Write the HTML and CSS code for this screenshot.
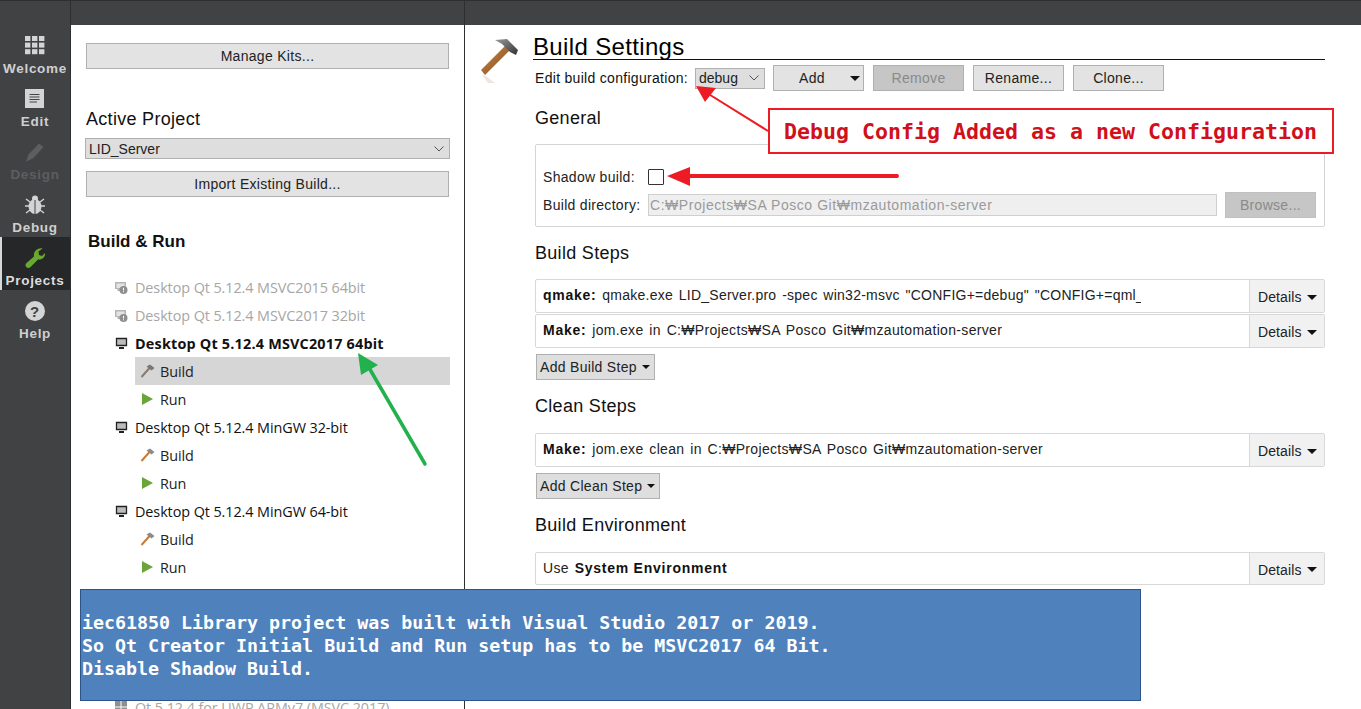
FILE: index.html
```html
<!DOCTYPE html>
<html lang="en">
<head>
<meta charset="utf-8">
<title>Qt Creator - Build Settings</title>
<link rel="stylesheet" href="styles.css">
</head>
<body>
<div class="app">
  <header class="topbar"><div class="tb-side"></div><div class="tb-left"></div><div class="tb-right"></div></header>
  <div class="main">
    <nav class="sidebar">
      <div class="mode">
        <svg class="mode-ico" viewBox="0 0 20 20"><g fill="#d4d4d4"><rect x="0" y="0" width="5.4" height="5"/><rect x="7" y="0" width="5.4" height="5"/><rect x="14" y="0" width="5.4" height="5"/><rect x="0" y="6.6" width="5.4" height="5"/><rect x="7" y="6.6" width="5.4" height="5"/><rect x="14" y="6.6" width="5.4" height="5"/><rect x="0" y="13.2" width="5.4" height="5"/><rect x="7" y="13.2" width="5.4" height="5"/><rect x="14" y="13.2" width="5.4" height="5"/></g></svg>
        <span>Welcome</span>
      </div>
      <div class="mode">
        <svg class="mode-ico" viewBox="0 0 20 20"><rect width="19" height="19" fill="#d4d4d4"/><path d="M4.500 5.500H14.500M4.500 8H14.500M4.500 10.500H14.500M4.500 13H12" stroke="#444" stroke-width="1"/></svg>
        <span>Edit</span>
      </div>
      <div class="mode mode-off">
        <svg class="mode-ico" viewBox="0 0 20 20"><path d="M14 1.500 18.500 5 8 16.500 1 19.500 3.500 12.500Z" fill="#5c5e60"/></svg>
        <span>Design</span>
      </div>
      <div class="mode">
        <svg class="mode-ico" viewBox="0 0 20 20"><g stroke="#d4d4d4" stroke-width="1.400"><path d="M1 4 5 7M19 4 15 7M0 11H4M20 11H16M1 18 5 15M19 18 15 15"/></g><ellipse cx="10" cy="11.500" rx="6.500" ry="7.500" fill="#d4d4d4"/><circle cx="10" cy="3.500" r="3" fill="#d4d4d4"/><path d="M10 5V19" stroke="#404244" stroke-width="1"/></svg>
        <span>Debug</span>
      </div>
      <div class="mode mode-on">
        <svg class="mode-ico" viewBox="0 0 20 20"><path d="M17.500 0.500 13.500 3.500 14 7 17 8 20 5C20.500 9 17 12 13 11.500L5.500 19C4 20.500 1.500 20 .8 18.300 .2 17 .6 15.800 1.500 15L9 8.500C8 4 12.500-.5 17.500.5Z" fill="#6aa92f"/></svg>
        <span>Projects</span>
      </div>
      <div class="mode">
        <svg class="mode-ico" viewBox="0 0 20 20"><circle cx="10" cy="10" r="10" fill="#d4d4d4"/><text x="10" y="15.500" class="help-q">?</text></svg>
        <span>Help</span>
      </div>
    </nav>

    <aside class="left">
      <button class="btn btn-wide">Manage Kits...</button>
      <h2 class="active-title">Active Project</h2>
      <div class="combo combo-wide"><span>LID_Server</span><svg class="chev" viewBox="0 0 10 6"><path d="M.5.500 5 5 9.500.5" fill="none" stroke="#555"/></svg></div>
      <button class="btn btn-wide import">Import Existing Build...</button>
      <h3 class="br-title">Build &amp; Run</h3>
      <ul class="tree">
        <li class="kit kit-off"><svg class="kit-ico" viewBox="0 0 13 13"><path d="M0 1H11V8H7V10H2.500V8H0Z" fill="#b5b5b5"/><path d="M1.500 2.500H9.500V7H1.500Z" fill="#e4e4e4"/><circle cx="8.500" cy="9" r="4" fill="#8f8f8f"/><path d="M8.500 6.800V9.500M8.500 10.300V11.300" stroke="#fff"/></svg>Desktop Qt 5.12.4 MSVC2015 64bit</li>
        <li class="kit kit-off"><svg class="kit-ico" viewBox="0 0 13 13"><path d="M0 1H11V8H7V10H2.500V8H0Z" fill="#b5b5b5"/><path d="M1.500 2.500H9.500V7H1.500Z" fill="#e4e4e4"/><circle cx="8.500" cy="9" r="4" fill="#8f8f8f"/><path d="M8.500 6.800V9.500M8.500 10.300V11.300" stroke="#fff"/></svg>Desktop Qt 5.12.4 MSVC2017 32bit</li>
        <li class="kit kit-cur"><svg class="kit-ico" viewBox="0 0 13 13"><path d="M1.500 1.500H11.500V8.500H1.500Z" fill="#bbb" stroke="#222" stroke-width="1.300"/><path d="M4 10H9V12H4Z" fill="#222"/></svg>Desktop Qt 5.12.4 MSVC2017 64bit</li>
        <li class="sub sub-sel"><svg class="sub-ico" viewBox="0 0 16 14"><path d="M1.500 13 9.500 4" stroke="#8a7a6c" stroke-width="2"/><path d="M6.500 2.500 10 .5 14.500 4 11.500 6.500Z" fill="#777"/></svg>Build</li>
        <li class="sub"><svg class="sub-ico" viewBox="0 0 16 14"><path d="M2 1 13 7 2 13Z" fill="#6aa53a"/></svg>Run</li>
        <li class="kit"><svg class="kit-ico" viewBox="0 0 13 13"><path d="M1.500 1.500H11.500V8.500H1.500Z" fill="#bbb" stroke="#222" stroke-width="1.300"/><path d="M4 10H9V12H4Z" fill="#222"/></svg>Desktop Qt 5.12.4 MinGW 32-bit</li>
        <li class="sub"><svg class="sub-ico" viewBox="0 0 16 14"><path d="M1.500 13 9.500 4" stroke="#c87a35" stroke-width="2"/><path d="M6.500 2.500 10 .5 14.500 4 11.500 6.500Z" fill="#8a8a8a"/></svg>Build</li>
        <li class="sub"><svg class="sub-ico" viewBox="0 0 16 14"><path d="M2 1 13 7 2 13Z" fill="#6aa53a"/></svg>Run</li>
        <li class="kit"><svg class="kit-ico" viewBox="0 0 13 13"><path d="M1.500 1.500H11.500V8.500H1.500Z" fill="#bbb" stroke="#222" stroke-width="1.300"/><path d="M4 10H9V12H4Z" fill="#222"/></svg>Desktop Qt 5.12.4 MinGW 64-bit</li>
        <li class="sub"><svg class="sub-ico" viewBox="0 0 16 14"><path d="M1.500 13 9.500 4" stroke="#c87a35" stroke-width="2"/><path d="M6.500 2.500 10 .5 14.500 4 11.500 6.500Z" fill="#8a8a8a"/></svg>Build</li>
        <li class="sub"><svg class="sub-ico" viewBox="0 0 16 14"><path d="M2 1 13 7 2 13Z" fill="#6aa53a"/></svg>Run</li>
        <li class="kit kit-off kit-last"><svg class="kit-ico" viewBox="0 0 13 13"><g fill="#8f8f8f"><rect width="5.500" height="5.500"/><rect x="6.500" width="5.500" height="5.500"/><rect y="6.500" width="5.500" height="5.500"/><rect x="6.500" y="6.500" width="5.500" height="5.500"/></g></svg>Qt 5.12.4 for UWP ARMv7 (MSVC 2017)</li>
      </ul>
    </aside>

    <main class="right">
      <div class="hammer-col">
        <svg class="hammer" viewBox="0 0 40 46">
          <defs>
            <linearGradient id="hdl" x1="0" y1="0" x2="1" y2="1"><stop offset="0" stop-color="#d08a45"/><stop offset="1" stop-color="#7c4a1e"/></linearGradient>
            <linearGradient id="hd" x1="0" y1="0" x2="1" y2="1"><stop offset="0" stop-color="#9a9a9a"/><stop offset=".6" stop-color="#5a5c5e"/><stop offset="1" stop-color="#2f3032"/></linearGradient>
          </defs>
          <path d="M2 32 26 8 31 12 6 37Z" fill="url(#hdl)"/>
          <path d="M16 2 28 1 39 12 37 17 31 14 23 6Z" fill="url(#hd)"/>
          <path d="M3 37 7 38 16 45 9 45Z" fill="#eee6df"/>
        </svg>
      </div>
      <div class="content">
        <h1 class="page-title">Build Settings</h1>
        <div class="config-row">
          <label class="cfg-label">Edit build configuration:</label>
          <div class="combo combo-debug"><span>debug</span><svg class="chev" viewBox="0 0 10 6"><path d="M.5.500 5 5 9.500.5" fill="none" stroke="#555"/></svg></div>
          <button class="btn btn-cfg btn-add"><span>Add</span><i class="caret"></i></button>
          <button class="btn btn-cfg btn-dis">Remove</button>
          <button class="btn btn-cfg">Rename...</button>
          <button class="btn btn-cfg">Clone...</button>
        </div>
        <h2 class="sec sec-general">General</h2>
        <section class="gen-box">
          <div class="gen-row gen-shadow"><span class="gen-label">Shadow build:</span><span class="check"></span></div>
          <div class="gen-row gen-dir"><span class="gen-label">Build directory:</span><div class="path-input">C:₩Projects₩SA Posco Git₩mzautomation-server</div><button class="btn btn-browse">Browse...</button></div>
        </section>
        <h2 class="sec sec-steps">Build Steps</h2>
        <div class="step"><div class="step-text step-clip"><b>qmake:</b> qmake.exe LID_Server.pro -spec win32-msvc "CONFIG+=debug" "CONFIG+=qml_debug"</div><div class="details">Details<i class="caret"></i></div></div>
        <div class="step step-2"><div class="step-text"><b>Make:</b> jom.exe in C:₩Projects₩SA Posco Git₩mzautomation-server</div><div class="details">Details<i class="caret"></i></div></div>
        <button class="btn btn-step">Add Build Step<i class="caret caret-sm"></i></button>
        <h2 class="sec sec-clean">Clean Steps</h2>
        <div class="step"><div class="step-text"><b>Make:</b> jom.exe clean in C:₩Projects₩SA Posco Git₩mzautomation-server</div><div class="details">Details<i class="caret"></i></div></div>
        <button class="btn btn-step btn-step-clean">Add Clean Step<i class="caret caret-sm"></i></button>
        <h2 class="sec sec-env">Build Environment</h2>
        <div class="step step-env"><div class="step-text">Use <b>System Environment</b></div><div class="details">Details<i class="caret"></i></div></div>
      </div>
    </main>
  </div>

  <div class="callout">Debug Config Added as a new Configuration</div>
  <svg class="arrows" viewBox="0 0 1361 709">
    <path d="M768 131 707 93" stroke="#ed1c24" stroke-width="2" fill="none"/>
    <path d="M696 86 716 88 705 102Z" fill="#ed1c24"/>
    <path d="M680 176H897" stroke="#ed1c24" stroke-width="4" stroke-linecap="round" fill="none"/>
    <path d="M667 176 690 167V186Z" fill="#ed1c24"/>
    <path d="M425 464 368 366" stroke="#22b14c" stroke-width="3.500" stroke-linecap="round" fill="none"/>
    <path d="M358 353 378 365 361 375Z" fill="#22b14c"/>
  </svg>
  <div class="note">
    <p>iec61850 Library project was built with Visual Studio 2017 or 2019.</p>
    <p>So Qt Creator Initial Build and Run setup has to be MSVC2017 64 Bit.</p>
    <p>Disable Shadow Build.</p>
  </div>
</div>
</body>
</html>
```
FILE: styles.css
```css
* { box-sizing: border-box; }
html, body { margin: 0; height: 100%; overflow: hidden; background: #fff; }
body { font-family: "Liberation Sans", Arial, sans-serif; font-size: 14px; color: #111; }
.app { position: relative; width: 1361px; height: 709px; overflow: hidden; display: flex; flex-direction: column; }

.topbar { height: 25px; display: flex; background: #404244; border-top: 1px solid #2e2f30; flex: none; }
.tb-side { width: 71px; border-right: 1px solid #2e2f30; }
.tb-left { width: 394px; border-right: 1px solid #2e2f30; }
.tb-right { flex: 1; }

.main { flex: 1; display: flex; min-height: 0; }

.sidebar { width: 71px; flex: none; background: #404244; border-right: 1px solid #2e2f30; }
.mode { height: 53px; display: flex; flex-direction: column; align-items: center; padding-top: 11px; color: #cfcfcf; font-weight: 700; font-size: 13.5px; letter-spacing: .7px; line-height: 16px; }
.mode-ico { width: 20px; height: 20px; display: block; margin-bottom: 5px; }
.mode-off { color: #5c5e60; }
.mode-on { background: #262728; border-left: 2px solid #d8d8d8; color: #dcdcdc; padding-right: 2px; }
.help-q { font: 700 15px "Liberation Sans", sans-serif; fill: #404244; text-anchor: middle; }

.left { width: 394px; flex: none; border-right: 1px solid #2e2f30; padding: 18px 14px 0 14px; }
.btn { font: 14px "Liberation Sans", Arial, sans-serif; color: #222; background: #e3e3e3; border: 1px solid #b0b0b0; height: 26px; padding: 0; display: flex; align-items: center; justify-content: center; letter-spacing: .3px; }
.btn-wide { width: 363px; margin-left: 1px; }
.import { margin-top: 12px; }
.active-title { font-size: 18px; font-weight: 400; line-height: 22px; margin: 39px 0 8px 1px; letter-spacing: .3px; color: #111; }
.combo { display: flex; align-items: center; justify-content: space-between; background: #dedede; border: 1px solid #b0b0b0; padding: 0 5px 0 3px; font-size: 14px; color: #222; height: 21px; }
.combo-wide { width: 365px; }
.chev { width: 10px; height: 6px; flex: none; }
.br-title { font-size: 17px; font-weight: 700; line-height: 22px; margin: 34px 0 20px 3px; color: #111; }

.tree { list-style: none; margin: 0; padding: 0; font-family: "Open Sans", sans-serif; font-size: 14.4px; letter-spacing: -.08px; }
.kit, .sub { height: 28px; display: flex; align-items: center; white-space: nowrap; }
.kit { margin-left: 30px; }
.kit-ico { width: 13px; height: 13px; margin-right: 7px; flex: none; }
.kit-off { color: #a6a6a6; }
.kit-cur { font-weight: 700; color: #111; letter-spacing: .2px; }
.kit-last { margin-top: 112px; }
.sub { margin-left: 50px; width: 315px; padding-left: 5px; color: #222; }
.sub-ico { width: 16px; height: 14px; margin-right: 4px; flex: none; }
.sub-sel { background: #d6d6d6; }

.right { flex: 1; display: flex; min-width: 0; }
.hammer-col { width: 68px; flex: none; padding: 13px 0 0 14px; }
.hammer { width: 40px; height: 46px; display: block; }
.content { width: 792px; }
.page-title { font-size: 24px; font-weight: 400; line-height: 28px; margin: 8px 0 0; height: 27px; border-bottom: 1px solid #111; letter-spacing: .35px; color: #000; }
.config-row { display: flex; align-items: center; height: 26px; margin-top: 5px; padding-left: 2px; }
.cfg-label { width: 160px; flex: none; letter-spacing: .3px; }
.combo-debug { width: 70px; margin-right: 8px; }
.btn-cfg { width: 91px; margin-right: 9px; }
.btn-add { justify-content: flex-start; padding: 0 3px 0 25px; }
.btn-add span { flex: 1; text-align: left; }
.btn-dis { background: #c6c6c6; color: #8a8a8a; }
.caret { display: inline-block; width: 0; height: 0; border-left: 5px solid transparent; border-right: 5px solid transparent; border-top: 5px solid #111; }
.caret-sm { margin-left: 5px; border-left-width: 4px; border-right-width: 4px; border-top-width: 4px; }

.sec { font-size: 18px; font-weight: 400; line-height: 22px; margin: 0 0 0 2px; letter-spacing: .3px; color: #111; }
.sec-general { margin-top: 16px; }
.sec-steps { margin-top: 15px; }
.sec-clean { margin-top: 15px; }
.sec-env { margin-top: 15px; }

.gen-box { margin: 15px 0 0 2px; height: 83px; border: 1px solid #d4d4d4; border-radius: 2px; width: 790px; padding: 0 7px; position: relative; }
.gen-row { display: flex; align-items: center; }
.gen-shadow { height: 18px; margin-top: 23px; }
.gen-dir { height: 26px; margin-top: 6px; }
.gen-label { width: 105px; flex: none; letter-spacing: .3px; color: #222; }
.check { width: 16px; height: 16px; border: 1px solid #333; background: #fff; display: block; border-radius: 1px; }
.path-input { width: 569px; height: 22px; border: 1px solid #cfcfcf; background: #efefef; color: #9a9a9a; padding-left: 1px; line-height: 20px; letter-spacing: .55px; white-space: nowrap; margin-right: 8px; }
.btn-browse { width: 91px; background: #c6c6c6; border-color: #c0c0c0; color: #8a8a8a; }

.step { margin: 15px 0 0 2px; width: 790px; height: 34px; border: 1px solid #d8d8d8; border-radius: 2px; display: flex; background: #fff; }
.step-2 { margin-top: 1px; }
.step-env { margin-top: 16px; height: 33px; }
.step-text { width: 713px; flex: none; padding-left: 7px; line-height: 30px; white-space: nowrap; overflow: hidden; letter-spacing: .32px; word-spacing: 1.6px; color: #222; }
.step-clip { width: 605px; margin-right: 108px; letter-spacing: .25px; }
.step-text b { color: #111; letter-spacing: .75px; word-spacing: 0; }
.details { flex: 1; background: #f1f1f1; border-left: 1px solid #d8d8d8; display: flex; align-items: center; padding: 2px 0 0 8px; gap: 5px; color: #222; letter-spacing: .1px; }
.btn-step { width: 119px; margin: 6px 0 0 3px; justify-content: flex-start; padding-left: 3px; background: #dedede; }
.btn-step-clean { width: 124px; }
.sec-clean + .step { margin-top: 16px; }

.callout { position: absolute; left: 768px; top: 108px; width: 566px; height: 46px; border: 2px solid #ed1c24; background: #fff; color: #d0101a; font: 700 21.6px/43px "DejaVu Sans Mono", monospace; padding-left: 14px; white-space: nowrap; }
.arrows { position: absolute; left: 0; top: 0; width: 1361px; height: 709px; pointer-events: none; }
.note { position: absolute; left: 80px; top: 589px; width: 1061px; height: 112px; background: #4f81bd; border: 1px solid #2c5488; color: #fff; padding: 21px 0 0 1px; font: 700 18.3px/23px "DejaVu Sans Mono", monospace; white-space: nowrap; }
.note p { margin: 0; }
```
